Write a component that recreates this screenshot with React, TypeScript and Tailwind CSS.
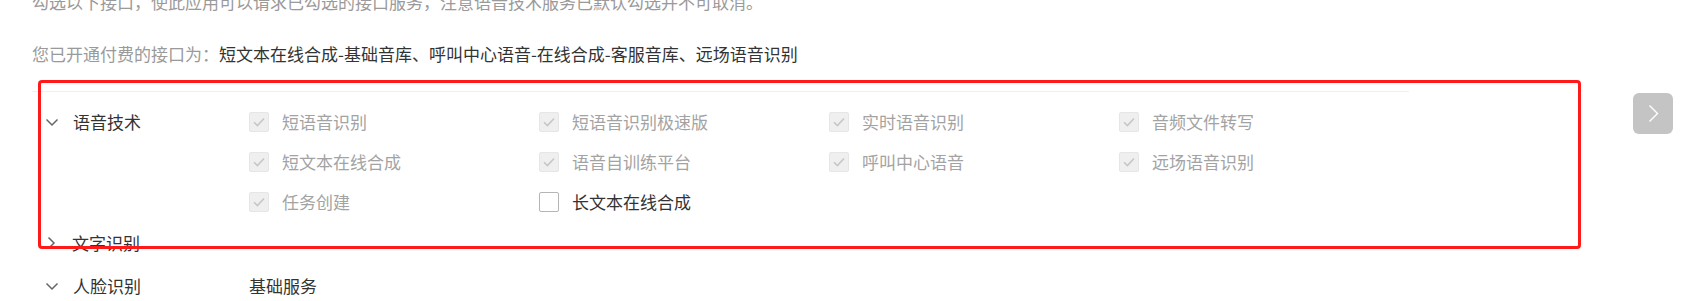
import React from 'react';

const speechItems: { label: string; checked: boolean; disabled: boolean }[] = [
  { label: '短语音识别', checked: true, disabled: true },
  { label: '短语音识别极速版', checked: true, disabled: true },
  { label: '实时语音识别', checked: true, disabled: true },
  { label: '音频文件转写', checked: true, disabled: true },
  { label: '短文本在线合成', checked: true, disabled: true },
  { label: '语音自训练平台', checked: true, disabled: true },
  { label: '呼叫中心语音', checked: true, disabled: true },
  { label: '远场语音识别', checked: true, disabled: true },
  { label: '任务创建', checked: true, disabled: true },
  { label: '长文本在线合成', checked: false, disabled: false },
];

const ChevronDown = () => (
  <svg width="14" height="9" viewBox="0 0 14 9" fill="none">
    <path d="M1.5 1.5l5.5 5.5 5.5-5.5" stroke="#666" strokeWidth="1.5" />
  </svg>
);

const ChevronRight = () => (
  <svg width="9" height="14" viewBox="0 0 9 14" fill="none">
    <path d="M1.5 1.5l5.5 5.5-5.5 5.5" stroke="#666" strokeWidth="1.5" />
  </svg>
);

const Checkbox = ({ checked, disabled }: { checked: boolean; disabled: boolean }) => {
  if (disabled) {
    return (
      <span className="w-[20px] h-[20px] shrink-0 rounded-[2px] border border-[#e6e6e6] bg-[#efefef] flex items-center justify-center">
        {checked && (
          <svg width="12" height="10" viewBox="0 0 12 10" fill="none">
            <path d="M1 5.2l3.4 3.3L11 1.5" stroke="#c6c6c6" strokeWidth="1.6" />
          </svg>
        )}
      </span>
    );
  }
  return <span className="w-[20px] h-[20px] shrink-0 rounded-[2px] border border-[#b5b5b5] bg-white" />;
};

export default function App() {
  return (
    <div className="relative w-[1687px] h-[301px] overflow-hidden bg-white font-['Noto_Sans_CJK_SC',sans-serif] text-[17px]">
      <div className="pl-[32px]">
        <p className="-mt-[10px] leading-[24px] text-[#9a9a9a]">
          勾选以下接口，使此应用可以请求已勾选的接口服务，注意语音技术服务已默认勾选并不可取消。
        </p>
        <p className="mt-[28px] leading-[24px] text-[#9a9a9a]">
          您已开通付费的接口为：
          <span className="text-[#333]">短文本在线合成-基础音库、呼叫中心语音-在线合成-客服音库、远场语音识别</span>
        </p>
        <div className="mt-[25px] h-px w-[1377px] bg-[#f0f0f0]" />
      </div>

      <div className="pl-[45px] mt-[10px] text-[#333]">
        <div className="flex">
          <div className="w-[204px] h-[40px] flex items-center gap-[14px]">
            <ChevronDown />
            <span>语音技术</span>
          </div>
          <div className="grid grid-cols-[290px_290px_290px_290px]">
            {speechItems.map((item) => (
              <label key={item.label} className="h-[40px] flex items-center gap-[13px]">
                <Checkbox checked={item.checked} disabled={item.disabled} />
                <span className={item.disabled ? 'text-[#a3a3a3]' : 'text-[#333]'}>{item.label}</span>
              </label>
            ))}
          </div>
        </div>

        <div className="h-[40px] mt-px flex items-center gap-[16px] pl-[2px]">
          <ChevronRight />
          <span>文字识别</span>
        </div>

        <div className="flex mt-[3px]">
          <div className="w-[204px] h-[40px] flex items-center gap-[14px]">
            <ChevronDown />
            <span>人脸识别</span>
          </div>
          <div className="h-[40px] flex items-center">基础服务</div>
        </div>
      </div>

      <div className="absolute left-[38px] top-[80px] w-[1543px] h-[169px] border-[3px] border-[#ff1a1a] rounded-[4px] pointer-events-none" />

      <button className="absolute left-[1633px] top-[93px] w-[40px] h-[41px] rounded-[6px] bg-[#c4c4c4] flex items-center justify-center">
        <svg width="11" height="19" viewBox="0 0 11 19" fill="none">
          <path d="M1.5 1.5l8 8-8 8" stroke="#fff" strokeWidth="1.4" />
        </svg>
      </button>
    </div>
  );
}
